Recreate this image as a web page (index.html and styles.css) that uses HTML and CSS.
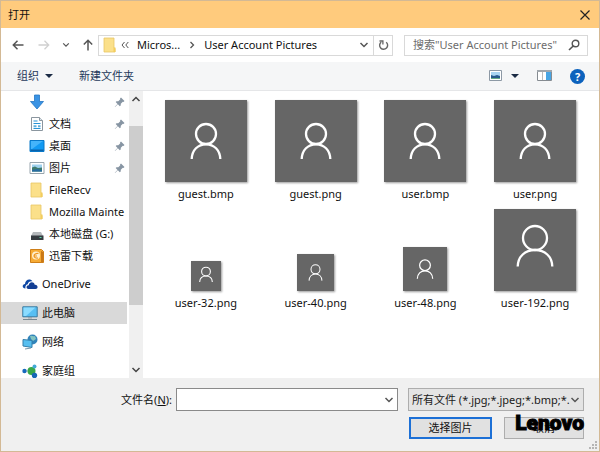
FILE: index.html
```html
<!DOCTYPE html>
<html lang="zh-CN">
<head>
  <meta charset="UTF-8" />
  <meta name="viewport" content="width=device-width, initial-scale=1.0"/>
  <title>打开</title>
  <link rel="stylesheet" href="styles.css">
</head>
<body>
  <!-- Shared shapes -->
  <svg class="defs" aria-hidden="true">
    <symbol id="person" viewBox="0 0 82 82">
      <circle cx="41" cy="34" r="10"/>
      <path d="M26.7 59C27 50 33 44.3 41 44.3S55 50 55.3 59"/>
    </symbol>
    <symbol id="person-big" viewBox="0 0 82 82">
      <circle cx="41" cy="29" r="12"/>
      <path d="M23.7 57.500C24 47.500 31 41 41 41S58 47.500 58.300 57.500"/>
    </symbol>
    <symbol id="chevron" viewBox="0 0 10 10">
      <path d="M1.500 3 5 6.500 8.500 3" fill="none" stroke="currentColor" stroke-width="1.500"/>
    </symbol>
    <symbol id="folder" viewBox="0 0 14 16">
      <path d="M1 1h10v10l1 .5V15H1z" fill="#fbe08a" stroke="#e8c765" stroke-width=".8"/>
      <path d="M10.500 10.500h2V15h-2z" fill="#f3cd5c"/>
    </symbol>
    <symbol id="pin" viewBox="0 0 12 12">
      <path d="M7 1.500 10.500 5 9.500 6 8.800 5.700 6.800 7.700 6.700 9.600 5.800 10.300 3.900 8.300 1 11 .8 10.800 3.500 7.900 1.700 6 2.500 5.200 4.300 5.200 6.300 3.200 6 2.500z" fill="#8795a3"/>
    </symbol>
  </svg>

  <div class="dialog">
    <header class="title-bar">
      <h1>打开</h1>
      <button type="button" class="icon-btn" aria-label="关闭">
        <svg width="12" height="12" viewBox="0 0 12 12"><path d="M1.500 1.500l9 9M10.500 1.500l-9 9" fill="none" stroke="#222" stroke-width="1.200"/></svg>
      </button>
    </header>

    <div class="nav-bar">
      <div class="nav-buttons">
        <button type="button" class="icon-btn" aria-label="后退">
          <svg width="12" height="12" viewBox="0 0 12 12"><path d="M11.500 6H1.500M5.500 1.800 1.300 6l4.200 4.200" fill="none" stroke="#555" stroke-width="1.500"/></svg>
        </button>
        <button type="button" class="icon-btn" aria-label="前进">
          <svg width="12" height="12" viewBox="0 0 12 12"><path d="M.5 6h10M6.500 1.800 10.700 6l-4.200 4.200" fill="none" stroke="#d0d0d0" stroke-width="1.300"/></svg>
        </button>
        <button type="button" class="icon-btn" aria-label="最近">
          <svg width="8" height="8"><use href="#chevron"/></svg>
        </button>
        <button type="button" class="icon-btn" aria-label="向上">
          <svg width="12" height="12" viewBox="0 0 12 12"><path d="M6 11.500V1.500M1.800 5.500 6 1.300l4.200 4.200" fill="none" stroke="#555" stroke-width="1.500"/></svg>
        </button>
      </div>
      <nav class="address">
        <svg width="14" height="16"><use href="#folder"/></svg>
        <svg width="8" height="8" viewBox="0 0 8 8"><path d="M3.500 1 1 4l2.500 3M7.300 1 4.800 4l2.500 3" fill="none" stroke="#555"/></svg>
        <a href="#">Micros...</a>
        <svg width="8" height="8" viewBox="0 0 8 8"><path d="M2.500 1 5.500 4l-3 3" fill="none" stroke="#555" stroke-width="1.300"/></svg>
        <a href="#">User Account Pictures</a>
        <button type="button" class="icon-btn history" aria-label="历史记录">
          <svg width="10" height="10"><use href="#chevron"/></svg>
        </button>
        <button type="button" class="icon-btn refresh" aria-label="刷新">
          <svg width="11" height="12" viewBox="0 0 11 12"><path d="M8.200 3.200A4 4 0 1 1 3.200 3.100" fill="none" stroke="#666" stroke-width="1.400"/><path d="M1.500 2h3.400v3.400" fill="none" stroke="#666" stroke-width="1.300"/></svg>
        </button>
      </nav>
      <div class="search">
        <input type="text" aria-label="搜索" placeholder="搜索&quot;User Account Pictures&quot;">
        <svg width="12" height="12" viewBox="0 0 12 12"><circle cx="7.500" cy="4.500" r="3.300" fill="none" stroke="#555" stroke-width="1.400"/><path d="M5.200 7 1 11" stroke="#555" stroke-width="1.600"/></svg>
      </div>
    </div>

    <div class="toolbar">
      <button type="button" class="tool">组织 <span class="caret"></span></button>
      <button type="button" class="tool">新建文件夹</button>
      <div class="view-tools">
        <button type="button" class="icon-btn view" aria-label="更改视图">
          <svg width="13" height="12" viewBox="0 0 13 12"><path d="M.5.5h12v10H.5z" fill="#fff" stroke="#8d99a5"/><path d="M2 2h9v7H2z" fill="#a8d4f2"/><path d="M2 5l3 1 3-1 3 1v3H2z" fill="#26598c"/><path d="M2 8h9v1H2z" fill="#65a884"/></svg>
          <span class="caret"></span>
        </button>
        <button type="button" class="icon-btn" aria-label="预览窗格">
          <svg width="15" height="12" viewBox="0 0 15 12"><path d="M.5.500h14v10H.5z" fill="#fff" stroke="#858b91"/><path d="M0 0h15v2H0z" fill="#a1a7ad"/><path d="M5.500 2v8" stroke="#bbb"/><path d="M9 2h5v8H9z" fill="#48a5e4"/></svg>
        </button>
        <button type="button" class="help" aria-label="帮助">?</button>
      </div>
    </div>

    <main class="content">
      <aside class="sidebar">
        <ul class="tree">
          <li class="sub">
            <svg width="16" height="16" viewBox="0 0 16 16"><path d="M5.500 1h5v6.500h4L8 15 1.500 7.500h4z" fill="#3a93e4" stroke="#2576c4" stroke-width=".8"/></svg>
            <svg class="pin" width="12" height="12"><use href="#pin"/></svg>
          </li>
          <li class="sub">
            <svg width="16" height="16" viewBox="0 0 16 16"><path d="M2.500 1.500h8l3 3v10h-11z" fill="#fff" stroke="#8b969f"/><path d="M10.500 1.500v3h3" fill="#dce4ea" stroke="#8b969f"/><path d="M4.500 5h4M4.500 7.500h7M4.500 12.500h7" stroke="#2a94d6" stroke-width="1.200"/><path d="M4.500 9.200h3v2h-3zM9 9.200h2.500v2H9z" fill="#5eb0de"/></svg>
            文档
            <svg class="pin" width="12" height="12"><use href="#pin"/></svg>
          </li>
          <li class="sub">
            <svg width="16" height="16" viewBox="0 0 16 16"><path d="M1 2.500h14v11H1z" fill="#129af3" stroke="#0878c9"/><path d="M1.500 11.500h13V13h-13z" fill="#0a62aa"/><path d="M2 3h12L3 11H2z" fill="#44b4fa"/></svg>
            桌面
            <svg class="pin" width="12" height="12"><use href="#pin"/></svg>
          </li>
          <li class="sub">
            <svg width="16" height="16" viewBox="0 0 16 16"><path d="M1 2.500h14v11H1z" fill="#fff" stroke="#98a5ad"/><path d="M3 4.500h10v7H3z" fill="#9fd1ee"/><path d="M3 7.500l3-1 3 1.500 4-.5v4H3z" fill="#3e7a6b"/><path d="M3 10l5-1 5 1v1.500H3z" fill="#276ca0"/></svg>
            图片
            <svg class="pin" width="12" height="12"><use href="#pin"/></svg>
          </li>
          <li class="sub">
            <svg width="16" height="16"><use href="#folder"/></svg>
            FileRecv
          </li>
          <li class="sub">
            <svg width="16" height="16"><use href="#folder"/></svg>
            Mozilla Mainte
          </li>
          <li class="sub">
            <svg width="16" height="16" viewBox="0 0 16 16"><path d="M4 6h8l2 4H2z" fill="#b4b8bb"/><path d="M2 9.500h12.500V14H2z" fill="#353b40"/><path d="M10.500 11h2v1h-2z" fill="#57d6a4"/></svg>
            本地磁盘 (G:)
          </li>
          <li class="sub">
            <svg width="16" height="16" viewBox="0 0 16 16"><path d="M1.500 1.500h11l2 2V14.500h-13z" fill="#f6ab35" stroke="#cf7f19"/><path d="M12 3l2 1v10h-2z" fill="#c97817"/><circle cx="7" cy="7.500" r="4" fill="#fff0cf"/><path d="M9.500 5.500C7 5 5 6.500 5 8s2 2.300 4 2M5 8h3" fill="none" stroke="#ee9623" stroke-width="1.200"/></svg>
            迅雷下载
          </li>
        </ul>
        <ul class="tree roots">
          <li>
            <svg width="16" height="16" viewBox="0 0 16 16"><path d="M3.500 12.500C-.5 12.500.2 8 3 8 3 4 8 1.800 10.500 5.300 7 5 6 7 5.800 8.300 4 8.500 3 10.500 3.500 12.500z" fill="#0d47a5"/><path d="M6.500 13C3.800 13 4 9.300 6.700 9.300 7.200 5.500 12 5.300 12.700 8.700 16.200 8.300 16.500 13 13.500 13z" fill="#133e94"/></svg>
            OneDrive
          </li>
          <li class="selected">
            <svg width="16" height="16" viewBox="0 0 16 16"><path d="M.8 1.800h14.400v10H.8z" fill="#57bff3" stroke="#39799f"/><path d="M1.500 2.500h12L4 11H1.500z" fill="#8bdcff"/><path d="M6 12h4v1.500H6z" fill="#9ba6ad"/><path d="M1 14.500h14" stroke="#788891"/></svg>
            此电脑
          </li>
          <li>
            <svg width="16" height="16" viewBox="0 0 16 16"><circle cx="10.500" cy="5.500" r="5" fill="#3184ba"/><path d="M8 2c2-1 3 1 5 0l1 3-3 2-2-2z" fill="#83c4bf"/><path d="M1 5.500l9 1v7L1 12z" fill="#57bff0" stroke="#347fab"/><path d="M3 15l6-1" stroke="#7896a8"/></svg>
            网络
          </li>
          <li>
            <svg width="16" height="16" viewBox="0 0 16 16"><path d="M2.500 8h7l3-5M9.500 8l3 5" stroke="#9bbac5" fill="none"/><circle cx="2.500" cy="8" r="2.200" fill="#1769bd"/><circle cx="9.500" cy="8" r="4" fill="#39a849"/><circle cx="12.500" cy="3.500" r="2" fill="#43a9d6"/><circle cx="12.500" cy="12.500" r="2.700" fill="#1766b5"/></svg>
            家庭组
          </li>
        </ul>
      </aside>
      <div class="scrollbar" aria-hidden="true">
        <svg class="flip" width="10" height="10"><use href="#chevron"/></svg>
        <div class="track"><div class="thumb"></div></div>
        <svg width="10" height="10"><use href="#chevron"/></svg>
      </div>
      <section class="files">
        <figure><svg class="thumbnail"><use href="#person"/></svg><figcaption>guest.bmp</figcaption></figure>
        <figure><svg class="thumbnail"><use href="#person"/></svg><figcaption>guest.png</figcaption></figure>
        <figure><svg class="thumbnail"><use href="#person"/></svg><figcaption>user.bmp</figcaption></figure>
        <figure><svg class="thumbnail"><use href="#person"/></svg><figcaption>user.png</figcaption></figure>
        <figure><svg class="thumbnail s32"><use href="#person-big"/></svg><figcaption>user-32.png</figcaption></figure>
        <figure><svg class="thumbnail s40"><use href="#person"/></svg><figcaption>user-40.png</figcaption></figure>
        <figure><svg class="thumbnail s48"><use href="#person"/></svg><figcaption>user-48.png</figcaption></figure>
        <figure><svg class="thumbnail"><use href="#person-big"/></svg><figcaption>user-192.png</figcaption></figure>
      </section>
    </main>

    <form class="footer">
      <div class="row">
        <label for="fileName">文件名(<u>N</u>):</label>
        <div class="field">
          <input type="text" id="fileName" name="fileName">
          <button type="button" class="icon-btn" aria-label="文件名列表">
            <svg width="10" height="10"><use href="#chevron"/></svg>
          </button>
        </div>
        <div class="field filter">
          <select name="fileType" aria-label="文件类型">
            <option>所有文件 (*.jpg;*.jpeg;*.bmp;*.</option>
          </select>
          <svg width="10" height="10"><use href="#chevron"/></svg>
        </div>
      </div>
      <div class="row actions">
        <button type="submit" class="btn primary">选择图片</button>
        <div class="cancel">
          <button type="button" class="btn">取消</button>
          <span class="brand">Lenovo</span>
        </div>
      </div>
      <svg class="grip" width="8" height="8" viewBox="0 0 8 8"><path d="M6 0h2v2H6zM3 3h2v2H3zM6 3h2v2H6zM0 6h2v2H0zM3 6h2v2H3zM6 6h2v2H6z" fill="#b5b5b5"/></svg>
    </form>
  </div>
</body>
</html>
```
FILE: styles.css
```css
* {
  box-sizing: border-box;
}

body {
  margin: 0;
  font-family: "Noto Sans", "Noto Sans CJK SC", sans-serif;
  font-size: 11px;
  line-height: 18px;
  color: #111;
}

button,
input,
select {
  font: inherit;
  color: inherit;
  margin: 0;
  padding: 0;
  border: none;
  background: transparent;
}

svg {
  display: block;
  flex: none;
}

.defs {
  position: absolute;
  width: 0;
  height: 0;
}

.dialog {
  display: flex;
  flex-direction: column;
  height: 100vh;
  border: 1px solid #d3b995;
  background-color: #fff;
}

.icon-btn {
  display: flex;
  align-items: center;
  justify-content: center;
  color: #555;
}

/* Title */
.title-bar {
  display: flex;
  flex: none;
  align-items: center;
  justify-content: space-between;
  height: 27px;
  padding: 0 8px 0 7px;
  background-color: #ffcb7d;
}

.title-bar h1 {
  margin: 0;
  font-size: 11px;
  font-weight: normal;
}

/* Navigation */
.nav-bar {
  display: flex;
  flex: none;
  align-items: center;
  height: 34px;
  padding: 0 11px;
}

.nav-buttons {
  display: flex;
  align-items: center;
  gap: 14px;
  margin-right: 4px;
}

.nav-buttons .icon-btn:nth-child(3) {
  margin: 0 -2px;
}

.address,
.search {
  display: flex;
  align-items: center;
  height: 21px;
  border: 1px solid #d9d9d9;
}

.address {
  flex: 1;
  gap: 4px;
  padding-left: 4px;
}

.address a {
  margin: 0 4px;
  color: inherit;
  text-decoration: none;
}

.history {
  margin-left: auto;
}

.refresh {
  width: 19px;
  height: 19px;
  border-left: 1px solid #d9d9d9;
}

.search {
  width: 184px;
  margin-left: 11px;
  padding: 0 7px 0 8px;
}

.search input {
  flex: 1;
  min-width: 0;
}

.search input::placeholder {
  color: #6d6d6d;
}

/* Toolbar */
.toolbar {
  display: flex;
  flex: none;
  align-items: center;
  gap: 26px;
  height: 29px;
  padding: 0 14px 0 16px;
  background-color: #f5f6f7;
  border-bottom: 1px solid #e5e6e8;
  color: #1e395b;
}

.tool {
  display: flex;
  align-items: center;
  gap: 6px;
}

.caret {
  border: 4px solid transparent;
  border-top-color: #1b2b45;
  border-bottom: none;
}

.view-tools {
  display: flex;
  align-items: center;
  gap: 18px;
  margin-left: auto;
}

.view {
  gap: 9px;
}

.help {
  width: 15px;
  height: 15px;
  border-radius: 50%;
  background-color: #0c62bd;
  color: #fff;
  font-weight: bold;
  line-height: 15px;
}

/* Folders and files */
.content {
  display: flex;
  flex: 1;
  min-height: 0;
}

.sidebar {
  width: 126px;
  overflow: hidden;
}

.tree {
  margin: 0;
  padding: 0;
  list-style: none;
}

.tree li {
  display: flex;
  align-items: center;
  gap: 4px;
  height: 22px;
  padding-left: 21px;
  white-space: nowrap;
}

.tree .sub {
  padding-left: 28px;
}

.tree .pin {
  margin: 0 1px 0 auto;
}

.roots {
  display: flex;
  flex-direction: column;
  gap: 7px;
  margin-top: 6px;
}

.tree .selected {
  background-color: #d9d9d9;
}

.scrollbar {
  display: flex;
  flex-direction: column;
  align-items: center;
  width: 14px;
  margin-left: 2px;
  padding: 3px 0;
  background-color: #f0f0f0;
  color: #444;
}

.flip {
  transform: rotate(180deg);
}

.track {
  flex: 1;
  width: 100%;
  padding: 22px 0 60px;
}

.thumb {
  height: 100%;
  background-color: #cdcdcd;
}

.files {
  flex: 1;
  display: grid;
  grid-template-columns: repeat(4, 1fr);
  align-content: start;
  gap: 6px 0;
  padding: 9px 9px 0 8px;
}

figure {
  display: flex;
  flex-direction: column;
  align-items: center;
  justify-content: flex-end;
  margin: 0;
}

figcaption {
  margin-top: 3px;
}

.thumbnail {
  width: 82px;
  height: 82px;
  background-color: #666;
  box-shadow: 1px 1px 2px rgba(0,0,0,0.4);
  fill: none;
  stroke: #fff;
  stroke-width: 2.3;
}

.s48 {
  width: 44px;
  height: 44px;
}

.s40 {
  width: 37px;
  height: 37px;
}

.s32 {
  width: 30px;
  height: 30px;
  stroke-width: 3;
}

/* File name and actions */
.footer {
  flex: none;
  position: relative;
  padding: 10px 15px 12px;
  background-color: #f0f0f0;
}

.row {
  display: flex;
  align-items: center;
  justify-content: flex-end;
}

.field {
  flex: 1;
  display: flex;
  align-items: center;
  height: 23px;
  margin-left: 4px;
  padding: 0 3px;
  border: 1px solid #8a8a8a;
  background-color: #fff;
  color: #555;
}

.row label {
  width: 156px;
  text-align: right;
}

.field input,
.field select {
  flex: 1;
  min-width: 0;
  color: #1a1a1a;
}

.filter {
  flex: none;
  width: 176px;
  margin-left: 10px;
  border-color: #adadad;
  background-color: #e4e4e4;
}

.filter select {
  appearance: none;
}

.actions {
  gap: 12px;
  margin-top: 6px;
}

.btn {
  display: block;
  width: 80px;
  height: 22px;
  border: 1px solid #adadad;
  background-color: #e1e1e1;
}

.primary {
  width: 83px;
  border: 2px solid #1d70d6;
}

.cancel {
  position: relative;
}

.brand {
  position: absolute;
  right: 0;
  bottom: 3px;
  font-family: "Roboto", "Liberation Sans", sans-serif;
  font-size: 21px;
  font-weight: 900;
  line-height: 26px;
  color: #000;
  -webkit-text-stroke: 1px #000;
}

.grip {
  position: absolute;
  right: 2px;
  bottom: 2px;
}
```
